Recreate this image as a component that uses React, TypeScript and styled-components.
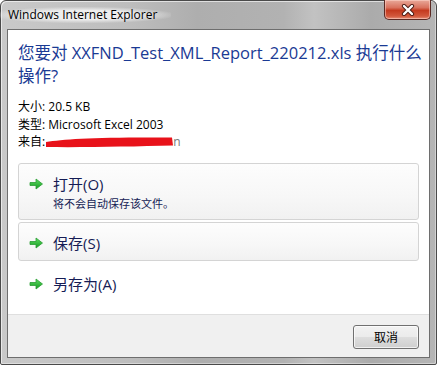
import React from "react";
import styled, { createGlobalStyle } from "styled-components";

const GlobalStyle = createGlobalStyle`
  html, body {
    margin: 0;
    padding: 0;
    background: #ffffff;
  }
  body {
    font-family: "Open Sans", "Noto Sans CJK SC", sans-serif;
  }
`;

const Window = styled.div`
  box-sizing: border-box;
  width: 437px;
  height: 365px;
  padding: 0 6px 6px 6px;
  border: 1px solid #4a4a4a;
  border-radius: 6px 6px 2px 2px;
  background: linear-gradient(
    90deg,
    #c9c9c9 0%,
    #bdbdbd 30%,
    #aeaeae 45%,
    #b2b2b2 65%,
    #c2c2c2 72%,
    #ababab 85%,
    #b5b5b5 100%
  );
  box-shadow: inset 1px 1px 0 rgba(255, 255, 255, 0.6),
    inset -1px -1px 0 rgba(255, 255, 255, 0.4);
  display: flex;
  flex-direction: column;
`;

const TitleBar = styled.div`
  height: 28px;
  display: flex;
  justify-content: space-between;
  align-items: flex-start;
`;

const TitleText = styled.div`
  margin-top: 6px;
  font-family: "Open Sans", sans-serif;
  font-size: 12px;
  line-height: 16px;
  color: #000;
  background: radial-gradient(
    ellipse at center,
    rgba(240, 240, 240, 0.95) 40%,
    rgba(240, 240, 240, 0) 75%
  );
  margin-left: -12px;
  padding: 0 14px 0 13px;
`;

const CloseButton = styled.div`
  box-sizing: border-box;
  width: 47px;
  height: 20px;
  margin-top: -1px;
  margin-right: -1px;
  border: 1px solid #5b2a24;
  border-top: none;
  border-radius: 0 0 5px 5px;
  background: linear-gradient(
    180deg,
    #e9a99a 0%,
    #d9725e 40%,
    #c43a1f 55%,
    #d2583c 85%,
    #e6907a 100%
  );
  box-shadow: inset 0 0 0 1px rgba(255, 220, 210, 0.5);
  display: flex;
  align-items: center;
  justify-content: center;
`;

const Client = styled.div`
  flex: 1;
  display: flex;
  flex-direction: column;
  border: 1px solid #6e6e6e;
  background: #ffffff;
`;

const Content = styled.div`
  flex: 1;
  padding: 11px 10px 0 10px;
`;

const Heading = styled.div`
  font-size: 16.5px;
  line-height: 23px;
  color: #1a3a94;
  white-space: nowrap;
`;

const InfoList = styled.div`
  margin-top: 11px;
  font-size: 12px;
  line-height: 17.5px;
  color: #000;
`;

const InfoRow = styled.div`
  display: flex;
  align-items: center;
  white-space: nowrap;
`;

const Redacted = styled.span`
  display: inline-flex;
  align-items: center;
  margin-left: 1px;
  color: #777;
`;

const Options = styled.div`
  margin-top: 12px;
  display: flex;
  flex-direction: column;
  gap: 2px;
`;

const Option = styled.div<{ $framed?: boolean; $hasNote?: boolean }>`
  display: grid;
  grid-template-columns: 24px 1fr;
  padding: ${(p) => (p.$hasNote ? "10px 0 7px 10px" : "10px 0 6px 10px")};
  border: 1px solid ${(p) => (p.$framed ? "#d4d4d4" : "transparent")};
  border-radius: 3px;
  background: ${(p) =>
    p.$framed
      ? "linear-gradient(180deg, #fdfdfd 0%, #f7f7f7 60%, #f1f1f1 100%)"
      : "transparent"};
`;

const ArrowCell = styled.div`
  height: 21px;
  display: flex;
  align-items: center;
`;

const OptionTitle = styled.div`
  font-size: 15px;
  line-height: 21px;
  color: #151c55;
`;

const OptionNote = styled.div`
  font-size: 11px;
  line-height: 17px;
  color: #151c55;
`;

const Footer = styled.div`
  height: 43px;
  box-sizing: border-box;
  border-top: 1px solid #dfdfdf;
  background: #f0f0f0;
  display: flex;
  justify-content: flex-end;
  align-items: flex-start;
  padding: 10px 10px 0 0;
`;

const Button = styled.div`
  box-sizing: border-box;
  width: 66px;
  height: 24px;
  border: 1px solid #707070;
  border-radius: 3px;
  background: linear-gradient(
    180deg,
    #f2f2f2 0%,
    #ebebeb 48%,
    #dddddd 52%,
    #cfcfcf 100%
  );
  box-shadow: inset 0 0 0 1px rgba(255, 255, 255, 0.7);
  display: flex;
  align-items: center;
  justify-content: center;
  font-size: 12px;
  color: #000;
`;

const GreenArrow = () => (
  <svg width="15" height="12" viewBox="0 0 15 12">
    <defs>
      <linearGradient id="ga" x1="0" y1="0" x2="0" y2="1">
        <stop offset="0" stopColor="#5fdc62" />
        <stop offset="1" stopColor="#159a22" />
      </linearGradient>
    </defs>
    <path
      d="M1 4.5 H7 V1 L13.5 6 L7 11 V7.5 H1 Z"
      fill="url(#ga)"
      stroke="#2a9d33"
      strokeWidth="0.8"
      strokeLinejoin="round"
    />
  </svg>
);

const CloseGlyph = () => (
  <svg width="14" height="12" viewBox="0 0 14 12">
    <path
      d="M3 2 L11 10 M11 2 L3 10"
      stroke="#4a1a14"
      strokeWidth="4.2"
      strokeLinecap="round"
    />
    <path
      d="M3 2 L11 10 M11 2 L3 10"
      stroke="#ffffff"
      strokeWidth="2.4"
      strokeLinecap="round"
    />
  </svg>
);

const RedMark = () => (
  <svg width="127" height="12" viewBox="0 0 127 12">
    <path
      d="M0 6 C18 3 50 1 126 1.5 L127 9.5 C86 10.5 38 11.5 0 11 Z"
      fill="#e8121a"
    />
  </svg>
);

const options = [
  { title: "打开(O)", note: "将不会自动保存该文件。", framed: true },
  { title: "保存(S)", framed: true },
  { title: "另存为(A)", framed: false },
];

export default function App() {
  return (
    <>
      <GlobalStyle />
      <Window>
        <TitleBar>
          <TitleText>Windows Internet Explorer</TitleText>
          <CloseButton>
            <CloseGlyph />
          </CloseButton>
        </TitleBar>
        <Client>
          <Content>
            <Heading>
              您要对 XXFND_Test_XML_Report_220212.xls 执行什么
              <br />
              操作?
            </Heading>
            <InfoList>
              <InfoRow>大小: 20.5 KB</InfoRow>
              <InfoRow>类型: Microsoft Excel 2003</InfoRow>
              <InfoRow>
                来自:
                <Redacted>
                  <RedMark />n
                </Redacted>
              </InfoRow>
            </InfoList>
            <Options>
              {options.map((o) => (
                <Option key={o.title} $framed={o.framed} $hasNote={!!o.note}>
                  <ArrowCell>
                    <GreenArrow />
                  </ArrowCell>
                  <div>
                    <OptionTitle>{o.title}</OptionTitle>
                    {o.note && <OptionNote>{o.note}</OptionNote>}
                  </div>
                </Option>
              ))}
            </Options>
          </Content>
          <Footer>
            <Button>取消</Button>
          </Footer>
        </Client>
      </Window>
    </>
  );
}
